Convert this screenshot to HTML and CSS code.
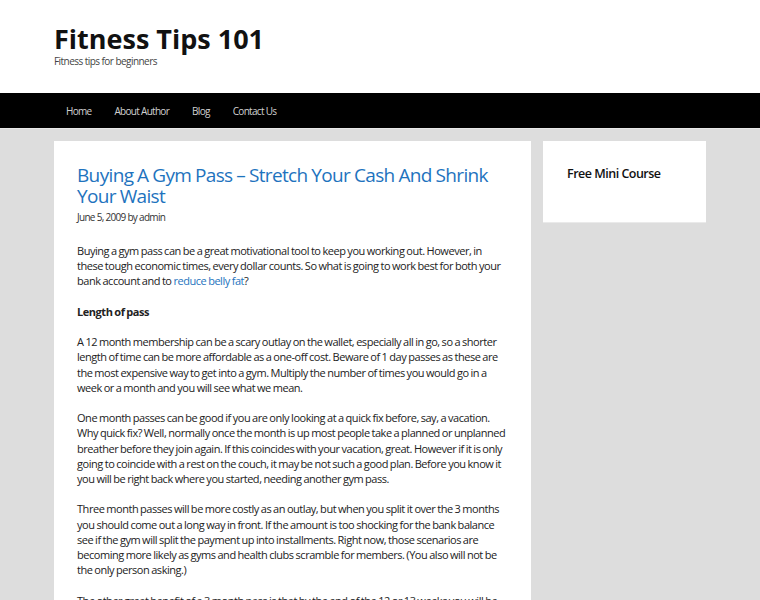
FILE: index.html
```html
<!DOCTYPE html>
<html>
<head>
<meta charset="utf-8">
<link rel="stylesheet" href="styles.css">
</head>
<body>
<header class="site-header">
  <div class="inner">
    <div class="site-title">Fitness Tips 101</div>
    <div class="tagline">Fitness tips for beginners</div>
  </div>
</header>
<nav class="main-nav">
  <ul class="menu">
    <li><a href="#">Home</a></li>
    <li><a href="#">About Author</a></li>
    <li><a href="#">Blog</a></li>
    <li><a href="#">Contact Us</a></li>
  </ul>
</nav>
<div class="site-content">
  <main class="content-card">
    <h1 class="entry-title">Buying A Gym Pass – Stretch Your Cash And Shrink Your Waist</h1>
    <div class="entry-meta">June 5, 2009 by admin</div>
    <div class="entry-content">
      <p>Buying a gym pass can be a great motivational tool to keep you working out. However, in these tough economic times, every dollar counts. So what is going to work best for both your bank account and to <a href="#">reduce belly fat</a>?</p>
      <p><strong>Length of pass</strong></p>
      <p>A 12 month membership can be a scary outlay on the wallet, especially all in go, so a shorter length of time can be more affordable as a one-off cost. Beware of 1 day passes as these are the most expensive way to get into a gym. Multiply the number of times you would go in a week or a month and you will see what we mean.</p>
      <p>One month passes can be good if you are only looking at a quick fix before, say, a vacation. Why quick fix? Well, normally once the month is up most people take a planned or unplanned breather before they join again. If this coincides with your vacation, great. However if it is only going to coincide with a rest on the couch, it may be not such a good plan. Before you know it you will be right back where you started, needing another gym pass.</p>
      <p>Three month passes will be more costly as an outlay, but when you split it over the 3 months you should come out a long way in front. If the amount is too shocking for the bank balance see if the gym will split the payment up into installments. Right now, those scenarios are becoming more likely as gyms and health clubs scramble for members. (You also will not be the only person asking.)</p>
      <p>The other great benefit of a 3 month pass is that by the end of the 12 or 13 weeks you will be well on your way to a new healthy habit and a slimmer waist.</p>
    </div>
  </main>
  <aside class="sidebar">
    <div class="widget">
      <h2 class="widget-title">Free Mini Course</h2>
    </div>
  </aside>
</div>
</body>
</html>
```

FILE: styles.css
```css
html, body {
  margin: 0;
  padding: 0;
}
body {
  background: #dddddd;
  font-family: "Open Sans", "Liberation Sans", sans-serif;
  color: #222;
  font-size: 11px;
  line-height: 15.2px;
  height: 600px;
  overflow: hidden;
}
.site-header {
  background: #fff;
  height: 93px;
}
.site-header .inner {
  padding: 24px 54px 0;
}
.site-title {
  font-size: 27px;
  font-weight: 700;
  line-height: 30px;
  color: #111;
}
.tagline {
  font-size: 10px;
  line-height: 12px;
  color: #444;
  margin-top: 1px;
  letter-spacing: -0.55px;
}
.main-nav {
  background: #000;
  height: 35px;
  border-bottom: 1px solid #e8e8e8;
}
.menu {
  list-style: none;
  margin: 0;
  padding: 0 0 0 54.5px;
  display: flex;
}
.menu a {
  display: block;
  padding: 0 11.5px;
  line-height: 36px;
  font-size: 10px;
  letter-spacing: -0.7px;
  color: #d0d0d0;
  text-decoration: none;
}
.site-content {
  display: flex;
  align-items: flex-start;
  gap: 12px;
  padding: 12px 54px 0;
}
.content-card {
  background: #fff;
  width: 477px;
  box-sizing: border-box;
  padding: 24px 23px 20px 23px;
  flex: none;
}
.entry-title {
  margin: 0;
  font-size: 19px;
  font-weight: 400;
  line-height: 21px;
  color: #1e73be;
  letter-spacing: -0.65px;
  word-spacing: -0.5px;
}
.entry-meta {
  font-size: 10px;
  line-height: 14px;
  color: #333;
  margin-top: 3px;
  letter-spacing: -0.7px;
}
.entry-content {
  margin-top: 19px;
  letter-spacing: -0.46px;
  word-spacing: -0.5px;
}
.entry-content p {
  margin: 0 0 15.2px;
}
.entry-content a {
  color: #1e73be;
  text-decoration: none;
}
.sidebar {
  width: 163px;
  flex: none;
}
.widget {
  background: #fff;
  height: 82px;
  box-sizing: border-box;
  padding: 25px 24px;
  border-bottom: 1px solid #eaeaea;
}
.widget-title {
  margin: 0;
  font-size: 12.5px;
  font-weight: 600;
  line-height: 16px;
  color: #111;
  letter-spacing: -0.5px;
}
```
